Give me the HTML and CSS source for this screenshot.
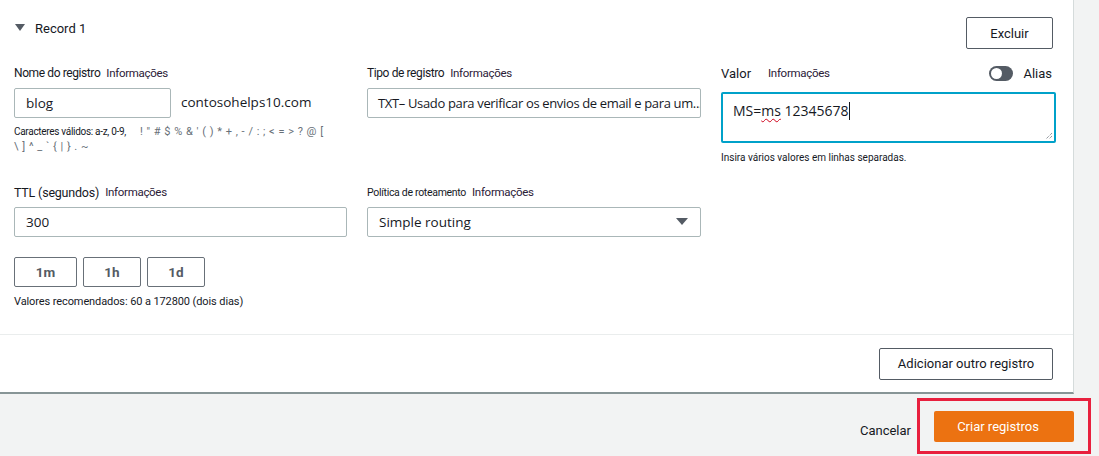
FILE: index.html
```html
<!DOCTYPE html>
<html lang="pt">
<head>
<meta charset="utf-8">
<title>Record</title>
<link rel="stylesheet" href="styles.css">
</head>
<body>
<div class="page">
  <section class="panel">
    <div class="record-head">
      <div class="record-title">
        <svg class="caret" width="10" height="8" viewBox="0 0 10 8"><path d="M0 0 H10 L5 7 Z" fill="#545b64"/></svg>
        <span>Record 1</span>
      </div>
      <button class="btn btn-excluir">Excluir</button>
    </div>

    <div class="fields">
      <div class="field">
        <div class="label-row"><span class="label">Nome do registro</span><span class="info">Informações</span></div>
        <div class="name-row">
          <div class="input name-input">blog</div>
          <span class="domain">contosohelps10.com</span>
        </div>
        <div class="hint chars">
          <span class="hint-dark">Caracteres válidos: a-z, 0-9,</span><span class="sym">! " # $ % &amp; ' ( ) * + , - / : ; &lt; = &gt; ? @ [</span><br>
          <span class="sym sym2">\ ] ^ _ ` { | } . ~</span>
        </div>
      </div>

      <div class="field">
        <div class="label-row"><span class="label">Tipo de registro</span><span class="info">Informações</span></div>
        <div class="input type-input">TXT– Usado para verificar os envios de email e para um...</div>
      </div>

      <div class="field">
        <div class="label-row value-row">
          <span class="label label-lg">Valor</span><span class="info info-wide">Informações</span>
          <span class="alias"><span class="toggle"><span class="knob"></span></span><span class="alias-text">Alias</span></span>
        </div>
        <div class="textarea">
          <span>MS=<span class="spell">ms</span> 12345678</span><span class="cursor"></span>
          <svg class="grip" width="10" height="10" viewBox="0 0 10 10"><path d="M9 3 L3 9 M9 6 L6 9" stroke="#687078" stroke-width="1" stroke-dasharray="1 1"/></svg>
        </div>
        <div class="hint value-hint">Insira vários valores em linhas separadas.</div>
      </div>

      <div class="field row2">
        <div class="label-row"><span class="label label-ttl">TTL (segundos)</span><span class="info">Informações</span></div>
        <div class="input">300</div>
        <div class="quick">
          <button class="btn qbtn">1m</button>
          <button class="btn qbtn">1h</button>
          <button class="btn qbtn">1d</button>
        </div>
        <div class="hint rec">Valores recomendados: 60 a 172800 (dois dias)</div>
      </div>

      <div class="field row2">
        <div class="label-row"><span class="label label-sm">Política de roteamento</span><span class="info">Informações</span></div>
        <div class="input select">
          <span>Simple routing</span>
          <svg width="12" height="8" viewBox="0 0 12 8"><path d="M0 0 H12 L6 7 Z" fill="#545b64"/></svg>
        </div>
      </div>
      <div class="field row2"></div>
    </div>

    <div class="panel-foot">
      <button class="btn btn-add">Adicionar outro registro</button>
    </div>
  </section>

  <div class="actions">
    <button class="link-btn">Cancelar</button>
    <div class="highlight">
      <button class="btn-primary">Criar registros</button>
    </div>
  </div>
</div>
</body>
</html>
```

FILE: styles.css
```css
* { box-sizing: border-box; }
html, body { margin: 0; padding: 0; }
body {
  background: #f2f3f3;
  font-family: Roboto, "Liberation Sans", Arial, sans-serif;
  color: #16191f;
  width: 1099px;
  height: 456px;
  overflow: hidden;
}
button { font-family: inherit; }

.panel {
  width: 1074px;
  height: 394px;
  background: #fff;
  border-right: 1px solid #d5dbdb;
  border-bottom: 2px solid #879596;
  display: flex;
  flex-direction: column;
}

.record-head {
  display: flex;
  justify-content: space-between;
  align-items: flex-start;
  padding: 17px 20px 0 15px;
}
.record-title {
  display: flex;
  align-items: center;
  gap: 10px;
  font-size: 13px;
  margin-top: 4px;
}
.caret { display: block; margin-top: -1px; }

.btn {
  background: #fff;
  border: 1px solid #545b64;
  border-radius: 2px;
  color: #16191f;
  font-size: 13px;
  cursor: pointer;
}
.btn-excluir { width: 87px; height: 32px; }

.fields {
  display: grid;
  grid-template-columns: 333px 334px 335px;
  column-gap: 20px;
  padding: 16px 0 0 14px;
}
.field { display: flex; flex-direction: column; }
.row2 { margin-top: 19px; }

.label-row {
  display: flex;
  align-items: center;
  height: 16px;
  gap: 6px;
}
.label { font-size: 12px; letter-spacing: -0.4px; }
.label-lg { font-size: 13px; letter-spacing: 0; }
.label-sm { font-size: 10.5px; letter-spacing: -0.3px; }
.label-ttl { font-size: 12.5px; letter-spacing: -0.2px; }
.info { font-size: 11.5px; letter-spacing: -0.3px; color: #2b2037; }
.info-wide { margin-left: 11px; }
.alias {
  margin-left: auto;
  margin-right: 4px;
  display: flex;
  align-items: center;
  gap: 10px;
  font-size: 13px;
}
.toggle {
  width: 24px;
  height: 15px;
  border-radius: 8px;
  background: #545b64;
  display: flex;
  align-items: center;
  padding-left: 2px;
}
.knob { width: 11px; height: 11px; border-radius: 50%; background: #fff; }

.input {
  margin-top: 7px;
  height: 30px;
  border: 1px solid #aab7b8;
  border-radius: 2px;
  padding: 0 11px;
  display: flex;
  align-items: center;
  font-family: "Open Sans", Roboto, sans-serif;
  font-size: 13.5px;
  color: #16191f;
  white-space: nowrap;
  overflow: hidden;
}
.name-row { display: flex; align-items: flex-end; gap: 10px; }
.name-input { width: 157px; }
.domain {
  font-family: "Open Sans", Roboto, sans-serif;
  font-size: 13.5px;
  height: 30px;
  line-height: 28px;
}
.type-input {
  width: 334px;
  padding-left: 10px;
  font-size: 13px;
  letter-spacing: -0.35px;
}

.hint { font-size: 10px; line-height: 15px; }
.chars { margin-top: 6px; }
.hint-dark { letter-spacing: -0.3px; }
.sym { color: #687078; font-size: 11px; word-spacing: 1px; margin-left: 14px; }
.sym2 { margin-left: 0; }

.textarea {
  position: relative;
  margin-top: 11px;
  height: 51px;
  border: 2px solid #00a1c9;
  border-radius: 2px;
  padding: 7px 10px;
  font-family: "Open Sans", Roboto, sans-serif;
  font-size: 14px;
  display: flex;
  align-items: flex-start;
  line-height: 20px;
}
.spell { text-decoration: underline wavy #d0021b; text-decoration-thickness: 1px; text-underline-offset: 2px; }
.cursor { width: 1px; height: 18px; background: #16191f; margin-top: 1px; }
.grip { position: absolute; right: 1px; bottom: 1px; }
.value-hint { margin-top: 7px; }

.quick { display: flex; gap: 6px; margin-top: 20px; }
.qbtn {
  height: 30px;
  font-size: 13.5px;
  font-weight: 700;
  color: #545b64;
  border-color: #687078;
}
.qbtn:nth-child(1) { width: 63px; }
.qbtn:nth-child(2) { width: 58px; }
.qbtn:nth-child(3) { width: 58px; }
.rec { font-size: 11px; margin-top: 7px; letter-spacing: -0.1px; }

.select { justify-content: space-between; padding-right: 12px; }
.select svg { display: block; }

.panel-foot {
  margin-top: auto;
  border-top: 1px solid #eaeded;
  height: 58px;
  display: flex;
  justify-content: flex-end;
  align-items: center;
  padding-right: 20px;
}
.btn-add { width: 174px; height: 32px; }

.actions {
  display: flex;
  justify-content: flex-end;
  align-items: center;
  padding: 4px 8px 0 0;
  gap: 6px;
}
.link-btn {
  background: none;
  border: none;
  font-size: 13px;
  color: #16191f;
  padding: 0;
  margin-top: 9px;
}
.highlight {
  width: 174px;
  height: 56px;
  border: 3px solid #e8203e;
  display: flex;
  align-items: center;
  padding-left: 14px;
}
.btn-primary {
  width: 140px;
  height: 31px;
  background: #ec7211;
  color: #fff;
  border: none;
  border-radius: 2px;
  font-size: 13px;
  margin-top: 1px;
  padding-right: 18px;
}
```
